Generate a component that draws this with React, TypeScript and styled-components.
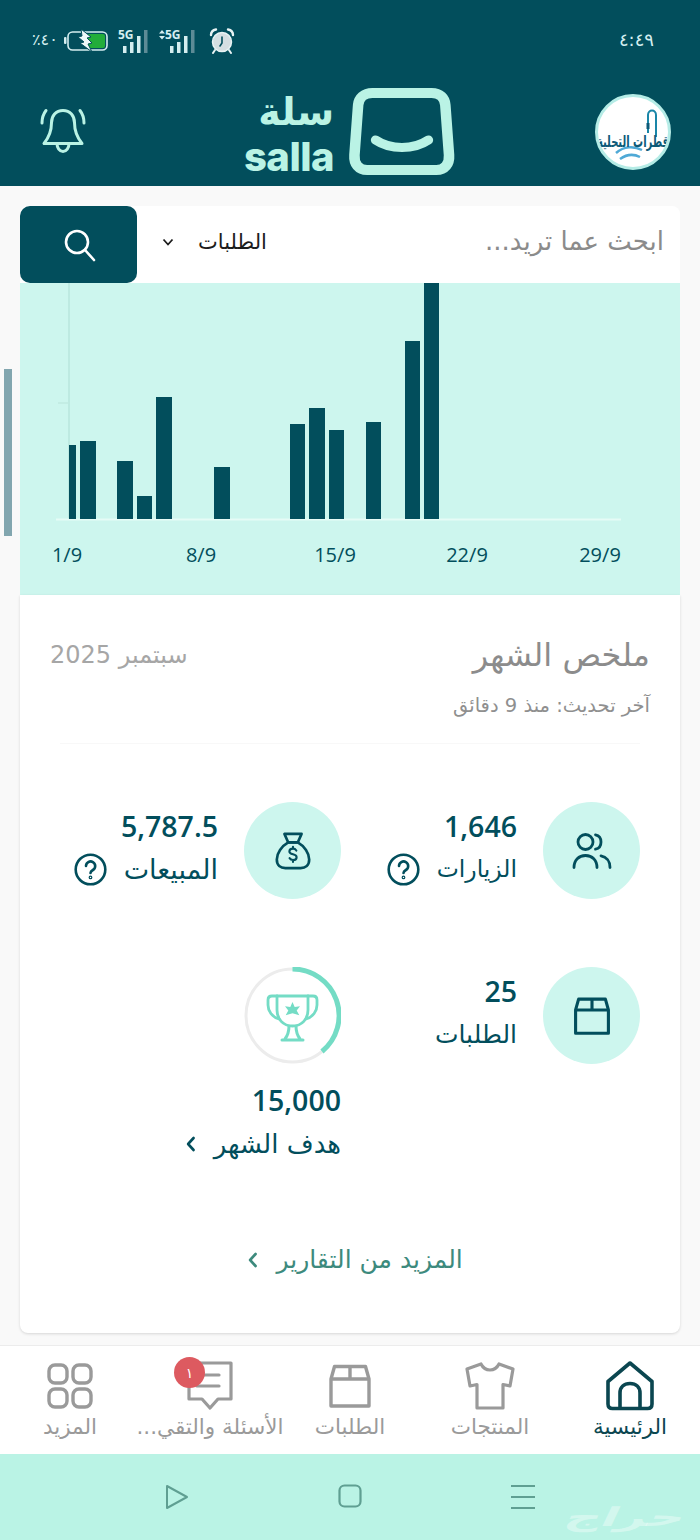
import React from "react";
import styled, { createGlobalStyle } from "styled-components";

const DARK = "#024e5c";
const MINT = "#baf3e5";
const PALE = "#cdf6ee";
const GREY = "#9a9a9a";
const AR = `"DejaVu Sans", sans-serif`;
const NUM = `"Open Sans", "Noto Sans", sans-serif`;

const Global = createGlobalStyle`
  html, body { margin: 0; padding: 0; background: #f9f9f9; }
  * { box-sizing: border-box; }
`;

const Screen = styled.div`
  position: relative;
  width: 700px;
  height: 1540px;
  overflow: hidden;
  display: flex;
  flex-direction: column;
  background: #f9f9f9;
  font-family: ${AR};
`;

const Header = styled.header`
  height: 186px;
  background: ${DARK};
  display: flex;
  flex-direction: column;
`;

const StatusBar = styled.div`
  height: 82px;
  padding: 0 46px 0 32px;
  display: flex;
  align-items: center;
  justify-content: space-between;
  color: #d5eef0;
`;

const Clock = styled.span`
  font-size: 18px;
  letter-spacing: 1px;
  margin-top: -3px;
`;

const StatusIcons = styled.div`
  direction: ltr;
  display: flex;
  align-items: center;
`;

const Percent = styled.span`
  font-size: 16px;
  margin-right: 6px;
  margin-top: -4px;
`;

const Signal = styled.div<{ $gap: number }>`
  margin-left: ${(p) => p.$gap}px;
  display: flex;
`;

const BrandRow = styled.div`
  height: 104px;
  padding: 0 29px 0 38px;
  display: flex;
  align-items: flex-start;
  justify-content: space-between;
`;

const Avatar = styled.div`
  position: relative;
  width: 76px;
  height: 76px;
  margin-top: 12px;
  border-radius: 50%;
  background: #ffffff;
  border: 3px solid #b5ece6;
  display: flex;
  align-items: center;
  justify-content: center;
  overflow: hidden;
`;

const AvatarText = styled.span`
  position: relative;
  top: 9px;
  font-size: 10px;
  font-weight: 700;
  color: #0c5a78;
  white-space: nowrap;
  transform: scaleY(1.6);
`;

const AvatarArt = styled.svg`
  position: absolute;
  inset: 0;
`;

const Logo = styled.div`
  display: flex;
  align-items: flex-start;
  gap: 12px;
  margin-top: 5px;
  margin-right: -19px;
`;

const Wordmark = styled.div`
  display: flex;
  flex-direction: column;
  align-items: flex-start;
  color: ${MINT};
  font-weight: 700;
  line-height: 1;
`;

const WordAr = styled.span`
  font-size: 38px;
  height: 44px;
  margin-top: 6px;
  font-family: ${AR};
`;

const WordEn = styled.span`
  direction: ltr;
  font-family: Inter, ${NUM};
  font-size: 40px;
  font-weight: 800;
  letter-spacing: -0.5px;
`;

const BellWrap = styled.div`
  margin-top: 24px;
  display: flex;
`;

const SearchBar = styled.div`
  width: 660px;
  height: 77px;
  margin: 20px auto 0;
  background: #ffffff;
  border-radius: 8px 8px 0 0;
  display: flex;
  align-items: center;
`;

const SearchPlaceholder = styled.div`
  flex: 1;
  padding-right: 16px;
  font-size: 26px;
  color: #8b8b8b;
  margin-top: -8px;
`;

const SearchScope = styled.div`
  display: flex;
  align-items: center;
  gap: 24px;
  margin-left: 25px;
  font-size: 21px;
  color: #1c1c1c;
  margin-top: -6px;
`;

const SearchButton = styled.button`
  width: 117px;
  height: 77px;
  border: 0;
  border-radius: 10px;
  background: ${DARK};
  display: flex;
  align-items: center;
  justify-content: center;
`;

const ChartPanel = styled.section`
  width: 660px;
  height: 312px;
  margin: 0 auto;
  background: ${PALE};
`;

const ChartLabel = styled.text`
  font-family: ${NUM};
  font-size: 20px;
  fill: ${DARK};
`;

const Card = styled.section`
  width: 660px;
  height: 738px;
  margin: 0 auto;
  padding: 41px 30px 0 30px;
  background: #ffffff;
  border-radius: 0 0 8px 8px;
  box-shadow: 0 1px 3px rgba(0, 0, 0, 0.14);
  display: flex;
  flex-direction: column;
`;

const CardHead = styled.div`
  display: flex;
  align-items: center;
  justify-content: space-between;
  height: 38px;
`;

const CardTitle = styled.h2`
  margin: 0;
  font-size: 32px;
  line-height: 38px;
  font-weight: 400;
  color: #8c8c8c;
`;

const CardMonth = styled.span`
  font-size: 24px;
  line-height: 38px;
  color: #a6a6a6;
`;

const Updated = styled.div`
  margin-top: 20px;
  font-size: 19.5px;
  line-height: 24px;
  color: #8f8f8f;
`;

const Divider = styled.hr`
  margin: 25px 10px 0 10px;
  border: 0;
  border-top: 1px solid #f8f8f8;
`;

const Stats = styled.div`
  margin: 58px 10px 0 0;
  display: grid;
  grid-template-columns: 299px 1fr;
  row-gap: 68px;
`;

const Stat = styled.div`
  display: flex;
  align-items: flex-start;
  gap: 26px;
`;

const Disc = styled.div`
  width: 97px;
  height: 97px;
  flex: none;
  border-radius: 50%;
  background: ${PALE};
  color: ${DARK};
  display: flex;
  align-items: center;
  justify-content: center;
`;

const StatBody = styled.div`
  padding-top: 4px;
  display: flex;
  flex-direction: column;
  gap: 6px;
`;

const StatValue = styled.div`
  font-family: ${NUM};
  font-size: 28.5px;
  font-weight: 600;
  line-height: 40px;
  color: ${DARK};
  direction: ltr;
  text-align: right;
`;

const StatLabel = styled.div<{ $size?: number }>`
  display: flex;
  align-items: center;
  gap: 17px;
  height: 34px;
  font-size: ${(p) => p.$size ?? 25}px;
  color: ${DARK};
  white-space: nowrap;
`;

const GoalStat = styled.div`
  display: flex;
  flex-direction: column;
  align-items: flex-start;
`;

const GoalValue = styled(StatValue)`
  margin-top: 16px;
`;

const GoalLabel = styled(StatLabel)`
  margin-top: 7px;
  gap: 18px;
`;

const MoreLink = styled.a`
  margin-top: 84px;
  padding-left: 10px;
  display: flex;
  justify-content: center;
  align-items: center;
  gap: 18px;
  font-size: 25px;
  color: #3d8a7d;
`;

const BottomNav = styled.nav`
  margin-top: auto;
  height: 109px;
  background: #ffffff;
  border-top: 1px solid #ececec;
  display: grid;
  grid-template-columns: repeat(5, 140px);
`;

const NavItem = styled.div<{ $active?: boolean }>`
  position: relative;
  padding-top: 15px;
  display: flex;
  flex-direction: column;
  align-items: center;
  color: ${(p) => (p.$active ? "#0b4650" : GREY)};
`;

const NavIcon = styled.div`
  height: 50px;
  display: flex;
  align-items: center;
  justify-content: center;
`;

const NavLabel = styled.span`
  margin-top: 1px;
  font-size: 21.5px;
  line-height: 30px;
  white-space: nowrap;
`;

const Badge = styled.span`
  position: absolute;
  top: 11px;
  right: 75px;
  width: 31px;
  height: 31px;
  border-radius: 50%;
  background: #dd5a60;
  color: #ffffff;
  font-size: 14px;
  display: flex;
  align-items: center;
  justify-content: center;
`;

const SystemBar = styled.div`
  height: 86px;
  background: ${MINT};
  direction: ltr;
  display: flex;
  align-items: flex-start;
  padding: 30px 0 0 164px;
  gap: 148px;
`;

const Watermark = styled.span`
  position: absolute;
  right: 20px;
  bottom: 10px;
  font-size: 26px;
  line-height: 1;
  font-weight: 700;
  color: rgba(255, 255, 255, 0.38);
  transform: scaleX(1.9) skewX(-14deg);
  transform-origin: right bottom;
`;

const ScrollThumb = styled.div`
  position: absolute;
  left: 4px;
  top: 369px;
  width: 8px;
  height: 167px;
  background: #82a6af;
`;

const bars: [number, number, number][] = [
  [49, 7, 445],
  [60, 16, 441],
  [97, 16, 461],
  [117, 15, 496],
  [136, 16, 397],
  [194, 16, 467],
  [270, 15, 424],
  [289, 16, 408],
  [309, 15, 430],
  [346, 15, 422],
  [385, 15, 341],
  [404, 15, 283],
];

const axisDays: [string, number][] = [
  ["1/9", 47],
  ["8/9", 181],
  ["15/9", 315],
  ["22/9", 447],
  ["29/9", 580],
];

const stroke = {
  fill: "none",
  stroke: "currentColor",
  strokeLinecap: "round" as const,
  strokeLinejoin: "round" as const,
};

const Chevron = ({ color, size = 16 }: { color: string; size?: number }) => (
  <svg width={size * 0.7} height={size} viewBox="0 0 10 16" fill="none" stroke={color} strokeWidth="2.6" strokeLinecap="round" strokeLinejoin="round">
    <path d="M8 2 2.5 8 8 14" />
  </svg>
);

const Question = () => (
  <svg width="33" height="33" viewBox="0 0 33 33" fill="none" stroke={DARK} strokeWidth="2.6" strokeLinecap="round">
    <circle cx="16.5" cy="16.5" r="14.8" />
    <path d="M12 13a4.6 4.6 0 1 1 6.9 4c-1.5.9-2.4 1.6-2.4 3" />
    <circle cx="16.5" cy="24.4" r="0.6" />
  </svg>
);

const Bell = () => (
  <svg width="50" height="50" viewBox="0 0 50 50" style={{ color: MINT }} strokeWidth="3" {...stroke}>
    <path d="M25 4.5c-7.2 0-11.5 5.4-11.5 12.3 0 9.800-3 15.200-7.500 20.700h38c-4.500-5.500-7.500-10.900-7.500-20.700 0-6.900-4.300-12.300-11.500-12.300Z" />
    <path d="M19 37.500c0 4.500 2.500 8 6 8s6-3.500 6-8" />
    <path d="M4 17c0-5 1.300-9 4-12.500M46 17c0-5-1.300-9-4-12.500" />
  </svg>
);

const Bag = () => (
  <svg width="112" height="90" viewBox="0 0 106 90" preserveAspectRatio="none" fill="none" stroke={MINT} strokeLinecap="round">
    <path d="M25 6h56c8 0 12.500 5 13 12l3.500 50c.6 9-4 15-12 15H20c-8 0-12.600-6-12-15l3.500-50C12 11 17 6 25 6Z" strokeWidth="10" />
    <path d="M28 53c14 10 36 10 50 0" strokeWidth="9" />
  </svg>
);

const Battery = () => (
  <svg width="44" height="24" viewBox="0 0 44 24">
    <rect x="0" y="8" width="2.500" height="7" rx="1" fill="#d5eef0" />
    <rect x="4" y="3" width="39" height="18" rx="4.500" fill="none" stroke="#d5eef0" strokeWidth="1.600" />
    <rect x="23" y="5" width="18" height="14" rx="2" fill="#22ad3a" />
    <path d="M17 0 27 8l-4 1 5 5-4 1 4 8-12-9 4-1-6-5 4-1Z" fill="#eef8f8" stroke={DARK} strokeWidth="1" />
  </svg>
);

const FiveG = ({ arrows }: { arrows?: boolean }) => (
  <svg width={arrows ? 38 : 32} height="34" viewBox={arrows ? "-6 -4 38 34" : "0 -4 32 34"}>
    {arrows && <path d="M-5 5.500-2 2l3 3.500ZM-5 8-2 11.500 1 8Z" fill="#d5eef0" />}
    <text x="1" y="11" fontFamily={NUM} fontSize="12" fontWeight="700" fill="#d5eef0">5G</text>
    <rect x="6" y="18" width="3.500" height="7" fill="#d5eef0" />
    <rect x="13" y="14" width="3.500" height="11" fill="#d5eef0" />
    <rect x="20" y="8" width="3.500" height="17" fill="#d5eef0" />
    <rect x="27" y="2" width="3.500" height="23" fill="#5d8b96" />
  </svg>
);

const Alarm = () => (
  <svg width="26" height="26" viewBox="0 0 26 26">
    <circle cx="13" cy="14" r="9.500" fill="#d5dfe2" stroke="#e8f3f4" strokeWidth="1.500" />
    <path d="M13 9v6l-2 3" fill="none" stroke={DARK} strokeWidth="1.600" strokeLinecap="round" />
    <path d="M2 7c0-3 2-5 5-5.500M24 7c0-3-2-5-5-5.500" fill="none" stroke="#e8f3f4" strokeWidth="2.400" strokeLinecap="round" />
    <path d="M6 22l-2 3M20 22l2 3" stroke="#e8f3f4" strokeWidth="2" strokeLinecap="round" />
  </svg>
);

const People = () => (
  <svg width="40" height="40" viewBox="0 0 40 40" strokeWidth="2.800" {...stroke}>
    <circle cx="13.500" cy="11" r="7.500" />
    <path d="M23.500 3.800c3.500.6 5.500 3.600 5.500 7.200s-2 6.600-5.500 7.200" />
    <path d="M2 36.500c0-7.500 4.800-12 11.500-12s11.500 4.500 11.500 12" />
    <path d="M29 24.800c5.300 1 9 5.300 9 11.700" />
  </svg>
);

const MoneyBag = () => (
  <svg width="40" height="40" viewBox="0 0 42 42" strokeWidth="2.800" {...stroke}>
    <path d="M12 3h18l-4 9H16Z" />
    <path d="M16 12h10c7 4 12 11 12 18 0 6-4 9-9 9H13c-5 0-9-3-9-9 0-7 5-14 12-18Z" />
    <path d="M24.500 20.500c-.8-1.300-2-2-3.500-2-2.200 0-3.800 1.200-3.800 3 0 4 7.600 2 7.600 6 0 1.800-1.600 3-3.800 3-1.500 0-2.800-.7-3.600-2M21 16.500v2M21 30.500v2" strokeWidth="2.200" />
  </svg>
);

const BoxIcon = ({ size, width: sw }: { size: number; width: number }) => (
  <svg width={size} height={size} viewBox="0 0 44 44" strokeWidth={sw} {...stroke} strokeLinecap="butt" strokeLinejoin="round">
    <path d="M3 15 6.500 2.500h31L41 15v27H3Z" />
    <path d="M3 15h38M22 2.500V15" />
  </svg>
);

const Trophy = () => (
  <svg width="97" height="97" viewBox="0 0 97 97" fill="none">
    <circle cx="48.500" cy="48.500" r="46.500" stroke="#ececec" strokeWidth="3" />
    <path d="M48.500 2A46.500 46.500 0 0 1 78 84.500" stroke="#74dcc5" strokeWidth="5" />
    <g stroke="#74dcc5" strokeWidth="2.800" strokeLinejoin="round" strokeLinecap="round">
      <path d="M33 29h31v14c0 9-6 16-15.500 16S33 52 33 43Z" />
      <path d="M33 29h-5c-3 0-4 1.500-4 4v5c0 6 4 12 11 14M64 29h5c3 0 4 1.500 4 4v5c0 6-4 12-11 14" />
      <path d="M45 59c0 5-1 9-4 13M52 59c0 5 1 9 4 13M38 73h21" strokeWidth="3" />
    </g>
    <path d="m48.500 35 2.200 5 5.300-.8-3.300 4.300 2.600 4.800-6.800-2-6.800 2 2.600-4.800-3.300-4.300 5.300.8Z" fill="#74dcc5" />
  </svg>
);

const Home = () => (
  <svg width="50" height="50" viewBox="0 0 50 50" strokeWidth="3.600" {...stroke}>
    <path d="M3 20.500 25 2l22 18.500V43c0 3-1.500 4.500-4.500 4.500h-35C4.500 47.500 3 46 3 43Z" />
    <path d="M15 47V32c0-6 4-9.500 10-9.500S35 26 35 32v15" />
  </svg>
);

const Shirt = () => (
  <svg width="50" height="48" viewBox="0 0 50 48" strokeWidth="3.200" {...stroke}>
    <path d="M16 2c2 4 5 6 9 6s7-2 9-6l14 5-3 17-7-1.500V46H12V22.500L5 24 2 7Z" />
  </svg>
);

const Chat = () => (
  <svg width="50" height="50" viewBox="0 0 50 50" strokeWidth="3.200" {...stroke}>
    <path d="M4 2h42v36H33l-8 9-8-9H4Z" />
    <path d="M12 14h22M12 25h22" />
  </svg>
);

const GridIcon = () => (
  <svg width="46" height="46" viewBox="0 0 46 46" strokeWidth="3.400" {...stroke}>
    <rect x="2" y="2" width="18" height="18" rx="6" />
    <rect x="26" y="2" width="18" height="18" rx="6" />
    <rect x="2" y="26" width="18" height="18" rx="6" />
    <rect x="26" y="26" width="18" height="18" rx="6" />
  </svg>
);

const Search = () => (
  <svg width="36" height="36" viewBox="0 0 36 36" fill="none" stroke="#fff" strokeWidth="2.600" strokeLinecap="round">
    <circle cx="16" cy="15" r="11" />
    <path d="m24 23 9 10" />
  </svg>
);

export default function App() {
  return (
    <Screen dir="rtl">
      <Global />
      <Header>
        <StatusBar>
          <Clock>٤:٤٩</Clock>
          <StatusIcons>
            <Percent>٪٤٠</Percent>
            <Battery />
            <Signal $gap={9}><FiveG /></Signal>
            <Signal $gap={9}><FiveG arrows /></Signal>
            <Signal $gap={13}><Alarm /></Signal>
          </StatusIcons>
        </StatusBar>
        <BrandRow>
          <Avatar>
            <AvatarArt viewBox="0 0 70 70">
              <path d="M50 36V18c0-6 8-6 8 0v22" fill="none" stroke="#1a86a8" strokeWidth="2" />
              <path d="M50 26v6" stroke="#0c5a78" strokeWidth="3" />
              <path d="M18 56c8-7 18-7 26-3M22 62c7-5 14-5 20-2" fill="none" stroke="#4fa9d6" strokeWidth="2.500" />
            </AvatarArt>
            <AvatarText>قطرات التحلية</AvatarText>
          </Avatar>
          <Logo>
            <Bag />
            <Wordmark>
              <WordAr>سلة</WordAr>
              <WordEn>salla</WordEn>
            </Wordmark>
          </Logo>
          <BellWrap><Bell /></BellWrap>
        </BrandRow>
      </Header>

      <SearchBar>
        <SearchPlaceholder>ابحث عما تريد...</SearchPlaceholder>
        <SearchScope>
          <span>الطلبات</span>
          <svg width="12" height="8" viewBox="0 0 12 8" fill="none" stroke="#1c1c1c" strokeWidth="1.800"><path d="m1.500 1.500 4.500 5 4.500-5" /></svg>
        </SearchScope>
        <SearchButton aria-label="بحث"><Search /></SearchButton>
      </SearchBar>

      <ChartPanel>
        <svg width="660" height="312" viewBox="0 0 660 312" direction="ltr">
          <path d="M49 0v236" stroke="#b7e6dc" strokeWidth="1.500" />
          <path d="M38 120h11" stroke="#bfeae0" strokeWidth="1.500" />
          <path d="M36 236.500h565" stroke="#e6fbf6" strokeWidth="2" />
          {bars.map(([x, w, top]) => (
            <rect key={x} x={x} y={top - 283} width={w} height={519 - top} fill={DARK} />
          ))}
          {axisDays.map(([label, x]) => (
            <ChartLabel key={label} x={x} y={279} textAnchor="middle">{label}</ChartLabel>
          ))}
        </svg>
      </ChartPanel>

      <Card>
        <CardHead>
          <CardTitle>ملخص الشهر</CardTitle>
          <CardMonth>سبتمبر 2025</CardMonth>
        </CardHead>
        <Updated>آخر تحديث: منذ 9 دقائق</Updated>
        <Divider />
        <Stats>
          <Stat>
            <Disc><People /></Disc>
            <StatBody>
              <StatValue>1,646</StatValue>
              <StatLabel $size={23.5}>الزيارات <Question /></StatLabel>
            </StatBody>
          </Stat>
          <Stat>
            <Disc><MoneyBag /></Disc>
            <StatBody>
              <StatValue>5,787.5</StatValue>
              <StatLabel $size={27}>المبيعات <Question /></StatLabel>
            </StatBody>
          </Stat>
          <Stat>
            <Disc><BoxIcon size={38} width={3.600} /></Disc>
            <StatBody>
              <StatValue>25</StatValue>
              <StatLabel>الطلبات</StatLabel>
            </StatBody>
          </Stat>
          <GoalStat>
            <Trophy />
            <GoalValue>15,000</GoalValue>
            <GoalLabel $size={26}>هدف الشهر <Chevron color={DARK} /></GoalLabel>
          </GoalStat>
        </Stats>
        <MoreLink>المزيد من التقارير <Chevron color="#3d8a7d" /></MoreLink>
      </Card>

      <BottomNav>
        <NavItem $active>
          <NavIcon><Home /></NavIcon>
          <NavLabel>الرئيسية</NavLabel>
        </NavItem>
        <NavItem>
          <NavIcon><Shirt /></NavIcon>
          <NavLabel>المنتجات</NavLabel>
        </NavItem>
        <NavItem>
          <NavIcon><BoxIcon size={44} width={3.400} /></NavIcon>
          <NavLabel>الطلبات</NavLabel>
        </NavItem>
        <NavItem>
          <NavIcon><Chat /></NavIcon>
          <Badge>١</Badge>
          <NavLabel>الأسئلة والتقي...</NavLabel>
        </NavItem>
        <NavItem>
          <NavIcon><GridIcon /></NavIcon>
          <NavLabel>المزيد</NavLabel>
        </NavItem>
      </BottomNav>

      <SystemBar>
        <svg width="26" height="26" viewBox="0 0 26 26" fill="none" stroke="#5f9f92" strokeWidth="2" strokeLinejoin="round">
          <path d="M3 2v22l20-11Z" />
        </svg>
        <svg width="24" height="24" viewBox="0 0 24 24" fill="none" stroke="#5f9f92" strokeWidth="2.200">
          <rect x="1.500" y="1.500" width="21" height="21" rx="5" />
        </svg>
        <svg width="26" height="26" viewBox="0 0 26 26" fill="none" stroke="#5f9f92" strokeWidth="2">
          <path d="M1 2h24M1 13h24M1 24h24" />
        </svg>
      </SystemBar>
      <Watermark>حراج</Watermark>
      <ScrollThumb />
    </Screen>
  );
}
